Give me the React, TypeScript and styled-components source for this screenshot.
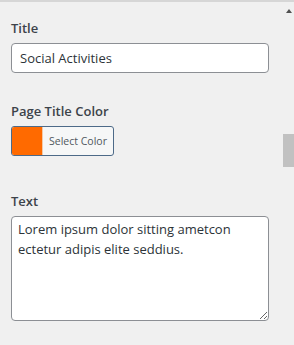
import React from 'react';
import styled, { createGlobalStyle } from 'styled-components';

const GlobalStyle = createGlobalStyle`
    html, body {
        margin: 0;
        padding: 0;
        background: #f0f0f0;
    }
    body {
        font-family: "Open Sans", "Noto Sans", sans-serif;
        color: #2c3338;
    }
`

const Page = styled.div`
    display: flex;
    width: 294px;
    height: 345px;
    border-top: 2px solid #d6d6d6;
    box-sizing: border-box;
    overflow: hidden;
`

const Panel = styled.div`
    flex: 1;
    padding: 17px 0 0 11px;
`

const Field = styled.div<{ $after?: number }>`
    display: flex;
    flex-direction: column;
    align-items: flex-start;
    gap: 6px;
    margin-bottom: ${p => p.$after ?? 29}px;
`

const Label = styled.label`
    font-size: 13px;
    font-weight: 600;
    line-height: 18px;
    color: #3c434a;
`

const TextInput = styled.input`
    width: 258px;
    height: 30px;
    box-sizing: border-box;
    padding: 0 8px;
    border: 1px solid #8c8f94;
    border-radius: 4px;
    background: #fff;
    font-family: inherit;
    font-size: 13px;
    color: #2c3338;
    outline: none;
`

const ColorButton = styled.button`
    display: flex;
    align-items: stretch;
    width: 103px;
    height: 30px;
    padding: 0;
    border: 1px solid #4d6a88;
    border-radius: 3px;
    background: #f6f7f7;
    overflow: hidden;
    cursor: pointer;
`

const Swatch = styled.span<{ $color: string }>`
    width: 30px;
    background: ${p => p.$color};
    border-right: 1px solid #f4c9a6;
`

const ButtonText = styled.span`
    flex: 1;
    display: flex;
    align-items: center;
    justify-content: center;
    font-family: "Open Sans", "Noto Sans", sans-serif;
    font-size: 10.5px;
    color: #50575e;
`

const TextArea = styled.textarea`
    width: 258px;
    height: 105px;
    box-sizing: border-box;
    padding: 2px 6px;
    border: 1px solid #8c8f94;
    border-radius: 4px;
    background: #fff;
    font-family: inherit;
    font-size: 13px;
    line-height: 20px;
    color: #2c3338;
    resize: both;
    outline: none;
`

const ScrollBar = styled.div`
    width: 11px;
    display: flex;
    flex-direction: column;
    align-items: center;
    background: #f0f0f0;
`

const Arrow = styled.div`
    margin: 7px 0 0 1px;
    width: 0;
    height: 0;
    border-left: 3.5px solid transparent;
    border-right: 3.5px solid transparent;
    border-bottom: 4px solid #505050;
`

const Thumb = styled.div`
    margin-top: 121px;
    width: 11px;
    height: 33px;
    background: #c1c1c1;
`

export default function App() {
    return (
        <>
            <GlobalStyle />
            <Page>
                <Panel>
                    <Field>
                        <Label>Title</Label>
                        <TextInput defaultValue="Social Activities" />
                    </Field>
                    <Field $after={36}>
                        <Label>Page Title Color</Label>
                        <ColorButton type="button">
                            <Swatch $color="#ff6a00" />
                            <ButtonText>Select Color</ButtonText>
                        </ColorButton>
                    </Field>
                    <Field>
                        <Label>Text</Label>
                        <TextArea defaultValue="Lorem ipsum dolor sitting ametcon ectetur adipis elite seddius." />
                    </Field>
                </Panel>
                <ScrollBar>
                    <Arrow />
                    <Thumb />
                </ScrollBar>
            </Page>
        </>
    );
}
